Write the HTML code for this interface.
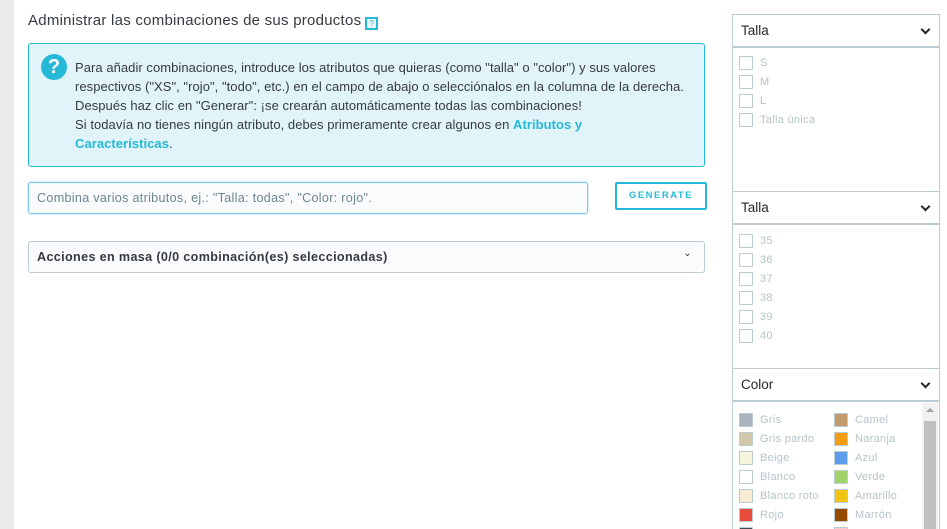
<!DOCTYPE html>
<html><head><meta charset="utf-8">
<style>
*{box-sizing:border-box;margin:0;padding:0}
html,body{width:947px;height:529px;overflow:hidden}
body{background:#fff;font-family:"Liberation Sans",sans-serif;position:relative}
.abs{position:absolute}
.strip{left:0;top:0;width:14px;height:529px;background:#e9eaec}
h1{position:absolute;left:28px;top:12px;font-size:15px;font-weight:normal;color:#363a41;white-space:nowrap;letter-spacing:0.25px}
.qm{display:inline-block;width:13px;height:13px;border:2px solid #25b9d7;color:#25b9d7;font-size:8px;line-height:9px;text-align:center;vertical-align:-1px;margin-left:4px;background:#eaf8fb}
.info{left:28px;top:43px;width:677px;height:124px;background:#e0f4f9;border:1px solid #25b9d7;border-radius:3px}
.info .ic{position:absolute;left:12px;top:10px;width:26px;height:26px;border-radius:50%;background:#25b9d7;color:#fff;font-weight:bold;font-size:20px;line-height:26px;text-align:center}
.info p{position:absolute;left:46px;top:14px;white-space:nowrap;font-size:13px;letter-spacing:0.05px;line-height:19px;color:#363a41}
.info b{color:#25b9d7}
.inp{left:28px;top:182px;width:560px;height:32px;border:1px solid #7cc4ee;border-radius:3px;background:#fafbfc;box-shadow:0 0 2px #a8d8f5;font-size:12.6px;letter-spacing:0.3px;color:#6c868e;padding:8px 0 0 8px}
.gen{left:615px;top:182px;width:92px;height:28px;border:2px solid #25b9d7;border-radius:2px;color:#25b9d7;font-size:9.5px;font-weight:bold;letter-spacing:1.5px;text-align:center;line-height:24px}
.bulk{left:28px;top:241px;width:677px;height:32px;border:1px solid #bbcdd2;border-radius:3px;background:#fafbfc;font-size:12.6px;letter-spacing:0.35px;font-weight:bold;color:#363a41;padding:8px 0 0 8px}
.chev{position:absolute;right:12px;top:6px;font-size:10px;color:#363a41;font-weight:normal}
.panel{left:732px;width:208px;border:1px solid #bbcdd2}
.hd{height:33px;border-bottom:2px solid #bbcdd2;font-size:13.5px;color:#25282b;padding:8px 0 0 8px;position:relative;background:#fff}
.hd:after{content:"";position:absolute;right:10px;top:11px;width:5px;height:5px;border-right:2px solid #25282b;border-bottom:2px solid #25282b;transform:rotate(45deg)}
.it{position:absolute;font-size:11px;color:#b5c4c9;line-height:14px;white-space:nowrap;letter-spacing:0.3px}
.it i{position:absolute;left:-21px;top:0;width:14px;height:14px;border:1px solid #bbcdd2}
</style></head><body>
<div class="abs strip"></div>
<h1>Administrar las combinaciones de sus productos<span class="qm">?</span></h1>
<div class="abs info"><div class="ic">?</div><p>Para añadir combinaciones, introduce los atributos que quieras (como "talla" o "color") y sus valores<br>respectivos ("XS", "rojo", "todo", etc.) en el campo de abajo o selecciónalos en la columna de la derecha.<br>Después haz clic en "Generar": ¡se crearán automáticamente todas las combinaciones!<br>Si todavía no tienes ningún atributo, debes primeramente crear algunos en <b>Atributos y</b><br><b>Características</b>.</p></div>
<div class="abs inp">Combina varios atributos, ej.: "Talla: todas", "Color: rojo".</div>
<div class="abs gen">GENERATE</div>
<div class="abs bulk">Acciones en masa (0/0 combinación(es) seleccionadas)<span class="chev">⌄</span></div>

<div class="abs panel" style="top:14px;height:178px"><div class="hd">Talla</div></div>
<div class="abs panel" style="top:191px;height:178px"><div class="hd">Talla</div></div>
<div class="abs panel" style="top:368px;height:170px"><div class="hd">Color</div></div>

<div class="it" style="left:760px;top:56px"><i></i>S</div>
<div class="it" style="left:760px;top:75px"><i></i>M</div>
<div class="it" style="left:760px;top:94px"><i></i>L</div>
<div class="it" style="left:760px;top:113px"><i></i>Talla única</div>

<div class="it" style="left:760px;top:234px"><i></i>35</div>
<div class="it" style="left:760px;top:253px"><i></i>36</div>
<div class="it" style="left:760px;top:272px"><i></i>37</div>
<div class="it" style="left:760px;top:291px"><i></i>38</div>
<div class="it" style="left:760px;top:310px"><i></i>39</div>
<div class="it" style="left:760px;top:329px"><i></i>40</div>

<div class="it" style="left:760px;top:413px"><i style="background:#aab2bd"></i>Gris</div>
<div class="it" style="left:760px;top:432px"><i style="background:#d2c6a8"></i>Gris pardo</div>
<div class="it" style="left:760px;top:451px"><i style="background:#f5f5dc"></i>Beige</div>
<div class="it" style="left:760px;top:470px"><i style="background:#fff"></i>Blanco</div>
<div class="it" style="left:760px;top:489px"><i style="background:#faebd7"></i>Blanco roto</div>
<div class="it" style="left:760px;top:508px"><i style="background:#e84c3d"></i>Rojo</div>
<div class="it" style="left:760px;top:527px"><i style="background:#434a54"></i></div>
<div class="it" style="left:855px;top:413px"><i style="background:#c19a6b"></i>Camel</div>
<div class="it" style="left:855px;top:432px"><i style="background:#f39d13"></i>Naranja</div>
<div class="it" style="left:855px;top:451px"><i style="background:#5d9cec"></i>Azul</div>
<div class="it" style="left:855px;top:470px"><i style="background:#a0d468"></i>Verde</div>
<div class="it" style="left:855px;top:489px"><i style="background:#f1c40f"></i>Amarillo</div>
<div class="it" style="left:855px;top:508px"><i style="background:#964b00"></i>Marrón</div>
<div class="it" style="left:855px;top:527px"><i style="background:#fcc"></i></div>

<div class="abs" style="left:922px;top:403px;width:16px;height:126px;background:#f1f1f1"></div>
<div class="abs" style="left:926px;top:408px;width:0;height:0;border-left:4px solid transparent;border-right:4px solid transparent;border-bottom:4px solid #a3a3a3"></div>
<div class="abs" style="left:924px;top:421px;width:12px;height:108px;background:#c1c1c1"></div>
</body></html>
